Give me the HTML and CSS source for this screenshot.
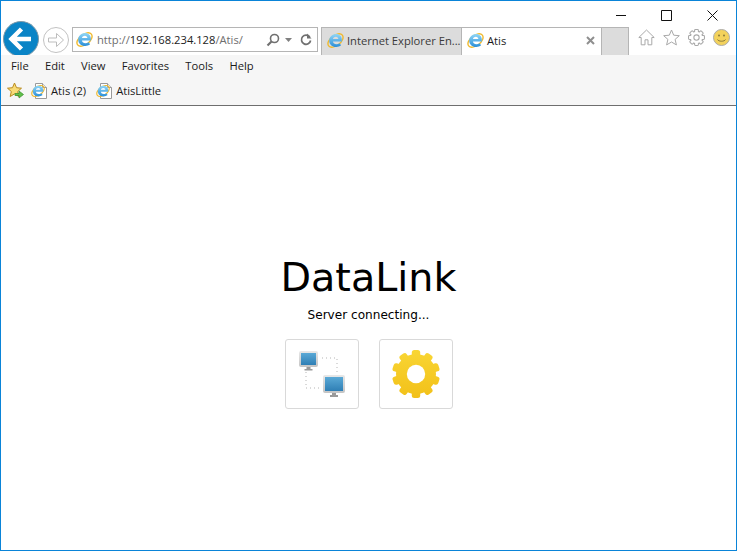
FILE: index.html
```html
<!DOCTYPE html>
<html lang="en">
<head>
<meta charset="utf-8">
<title>Atis</title>
<link rel="stylesheet" href="styles.css">
</head>
<body>
<svg class="defs" width="0" height="0" aria-hidden="true">
  <defs>
    <linearGradient id="ieBlue" x1="0" y1="0" x2="0" y2="1"><stop offset="0" stop-color="#8fd6f7"/><stop offset="1" stop-color="#2b8fd8"/></linearGradient>
    <linearGradient id="screen" x1="0" y1="0" x2="0" y2="1"><stop offset="0" stop-color="#5aa9d6"/><stop offset="1" stop-color="#2f7fb5"/></linearGradient>
    <linearGradient id="frame" x1="0" y1="0" x2="0" y2="1"><stop offset="0" stop-color="#e8e8e8"/><stop offset="1" stop-color="#c4c4c4"/></linearGradient>
    <linearGradient id="gold" gradientUnits="userSpaceOnUse" x1="0" y1="10" x2="0" y2="60"><stop offset="0" stop-color="#f9d634"/><stop offset="1" stop-color="#f2c018"/></linearGradient>
    <symbol id="ie" viewBox="0 0 16 16">
      <ellipse cx="8" cy="8" rx="8.200" ry="4.800" transform="rotate(-38 8 8)" fill="none" stroke="#efb92e" stroke-width="1.300"/>
      <path transform="translate(8 8) scale(1.080) translate(-8.300 -8.400)" fill="url(#ieBlue)" d="M13.800 9.200H6.100c.2 1.500 1.400 2.400 3 2.400 1 0 1.900-.3 2.700-.9l1.400 1.900c-1.200 1-2.700 1.500-4.300 1.500C5.400 14.100 2.800 11.800 2.800 8.600S5.400 2.800 8.800 2.800c3.100 0 5.100 2.200 5.100 5.300 0 .4 0 .8-.1 1.100zM6.100 7.200h4.700c-.1-1.200-.9-2-2.200-2s-2.300.8-2.500 2z"/>
    </symbol>
    <symbol id="favpage" viewBox="0 0 16 16">
      <path d="M4.500.5h7l4 4v11h-11z" fill="#fff" stroke="#9a9a9a"/>
      <path d="M11.500.5v4h4" fill="#eee" stroke="#9a9a9a"/>
      <use href="#ie" x="0" y="1" width="14" height="14"/>
    </symbol>
    <mask id="gearMask">
      <circle cx="37" cy="35" r="20" fill="#fff"/>
      <g fill="#fff">
        <rect x="32.800" y="11" width="8.400" height="48" rx="2.500"/>
        <rect x="32.800" y="11" width="8.400" height="48" rx="2.500" transform="rotate(36 37 35)"/>
        <rect x="32.800" y="11" width="8.400" height="48" rx="2.500" transform="rotate(72 37 35)"/>
        <rect x="32.800" y="11" width="8.400" height="48" rx="2.500" transform="rotate(108 37 35)"/>
        <rect x="32.800" y="11" width="8.400" height="48" rx="2.500" transform="rotate(144 37 35)"/>
      </g>
      <circle cx="37" cy="35" r="9.200" fill="#000"/>
    </mask>
  </defs>
</svg>
<div class="window">
  <header class="chrome">
    <div class="caption">
      <svg class="cap-icon" width="10" height="10" viewBox="0 0 10 10"><path d="M0 5.500h10" stroke="#111" fill="none"/></svg>
      <svg class="cap-icon" width="11" height="11" viewBox="0 0 11 11"><path d="M.5.5h10v10H.5z" stroke="#111" fill="none"/></svg>
      <svg class="cap-icon" width="11" height="11" viewBox="0 0 11 11"><path d="M.5.5l10 10M10.500.5l-10 10" stroke="#111" fill="none"/></svg>
    </div>
    <div class="navrow">
      <div class="back">
        <svg width="36" height="36" viewBox="0 0 36 36"><circle cx="18" cy="18" r="17.500" fill="#0a84c6" stroke="#7f99a8"/><path d="M28 18H10M18.500 8l-10 10 10 10" fill="none" stroke="#fff" stroke-width="4.500"/></svg>
      </div>
      <div class="forward">
        <svg width="26" height="26" viewBox="0 0 26 26"><circle cx="13" cy="13" r="12.500" fill="#fff" stroke="#c2c2c2"/><path d="M5.500 11h8V6.500l7 6.500-7 6.500V15h-8z" fill="#fff" stroke="#bdbdbd"/></svg>
      </div>
      <div class="address">
        <svg class="ie-icon" width="17" height="17"><use href="#ie"/></svg>
        <span class="url"><span class="dim">http://</span>192.168.234.128<span class="dim">/Atis/</span></span>
        <svg class="addr-tool" width="14" height="14" viewBox="0 0 14 14"><circle cx="8.500" cy="5.500" r="4" fill="none" stroke="#707070" stroke-width="1.600"/><path d="M5.500 8.500L1.500 12.500" stroke="#707070" stroke-width="2.200"/></svg>
        <svg class="addr-caret" width="7" height="4" viewBox="0 0 7 4"><path d="M0 0h7L3.500 4z" fill="#808080"/></svg>
        <svg class="addr-tool" width="12" height="13" viewBox="0 0 12 13"><path d="M9.800 4A4.600 4.600 0 1 0 10.600 7.500" fill="none" stroke="#707070" stroke-width="1.700"/><path d="M7 .5v5h4.500z" fill="#707070"/></svg>
      </div>
      <div class="tabs">
        <div class="tab">
          <svg class="ie-icon" width="17" height="17"><use href="#ie"/></svg>
          <span class="tab-title">Internet Explorer En...</span>
        </div>
        <div class="tab active">
          <svg class="ie-icon" width="17" height="17"><use href="#ie"/></svg>
          <span class="tab-title">Atis</span>
          <svg class="tab-close" width="9" height="9" viewBox="0 0 9 9"><path d="M1 1l7 7M8 1L1 8" stroke="#8f8f8f" stroke-width="2"/></svg>
        </div>
        <div class="tab newtab"></div>
      </div>
      <div class="tools">
        <svg width="17" height="17" viewBox="0 0 17 17"><path d="M8.500 1L.8 8.500h2.400v7.300h3.800v-5h3v5h3.800V8.500h2.400z" fill="#fff" stroke="#a9a9a9"/></svg>
        <svg width="17" height="17" viewBox="0 0 17 17"><path d="M8.500 1l2.200 5.200 5.600.5-4.200 3.700 1.300 5.500-4.900-2.900-4.900 2.900 1.300-5.500L.7 6.700l5.600-.5z" fill="#fff" stroke="#a9a9a9"/></svg>
        <svg width="17" height="17" viewBox="0 0 16 16" fill="#fff" stroke="#a9a9a9"><circle cx="8" cy="8" r="5.800"/><rect x="6.200" y=".5" width="3.600" height="15" rx=".8"/><rect x="6.200" y=".5" width="3.600" height="15" rx=".8" transform="rotate(45 8 8)"/><rect x="6.200" y=".5" width="3.600" height="15" rx=".8" transform="rotate(90 8 8)"/><rect x="6.200" y=".5" width="3.600" height="15" rx=".8" transform="rotate(135 8 8)"/><circle cx="8" cy="8" r="5.300" stroke="none"/><circle cx="8" cy="8" r="2.500"/></svg>
        <svg width="17" height="17" viewBox="0 0 17 17"><circle cx="8.500" cy="8.500" r="8" fill="#f3d25c" stroke="#ababab"/><circle cx="6" cy="6.500" r="1" fill="#8b7a3a"/><circle cx="11" cy="6.500" r="1" fill="#8b7a3a"/><path d="M4.500 10.500c1 2.300 7 2.300 8 0" fill="none" stroke="#8b7a3a"/></svg>
      </div>
    </div>
    <nav class="menubar">
      <span>File</span><span>Edit</span><span>View</span><span>Favorites</span><span>Tools</span><span>Help</span>
    </nav>
    <div class="favbar">
      <svg class="fav-star" width="17" height="17" viewBox="0 0 17 17"><path d="M7.500 1l2 4.700 5 .5-3.800 3.300 1.100 5-4.300-2.600-4.300 2.600 1.100-5L.5 6.200l5-.5z" fill="#f8dc78" stroke="#b98b1e"/><path d="M8 11.500h4V9l4.500 3.500L12 16v-2.500H8z" fill="#5fc04a" stroke="#3b8d2c" stroke-width=".7"/></svg>
      <a class="fav-link"><svg width="16" height="16"><use href="#favpage"/></svg>Atis (2)</a>
      <a class="fav-link"><svg width="16" height="16"><use href="#favpage"/></svg>AtisLittle</a>
    </div>
  </header>
  <main class="page">
    <h1 class="title">DataLink</h1>
    <p class="status">Server connecting...</p>
    <div class="actions">
      <button class="action" type="button" aria-label="Connection">
        <svg width="74" height="70" viewBox="0 0 74 70">
          <path d="M37 19H52V33M21 33V49H37" fill="none" stroke="#b5b5b5" stroke-dasharray="1 3"/>
          <rect x="14" y="12" width="19" height="16" rx="2" fill="url(#frame)"/>
          <rect x="16" y="14" width="15" height="12" fill="url(#screen)"/>
          <path d="M21.500 28h4v2h-4zM19.500 30h8v1.500h-8z" fill="#9a9a9a"/>
          <rect x="38" y="36" width="22" height="18" rx="2" fill="url(#frame)"/>
          <rect x="40" y="38" width="18" height="14" fill="url(#screen)"/>
          <path d="M47 54h4v2h-4zM45 56h8v2h-8z" fill="#9a9a9a"/>
        </svg>
      </button>
      <button class="action" type="button" aria-label="Settings">
        <svg width="74" height="70" viewBox="0 0 74 70"><rect x="10" y="8" width="54" height="54" fill="url(#gold)" mask="url(#gearMask)"/></svg>
      </button>
    </div>
  </main>
</div>
</body>
</html>
```

FILE: styles.css
```css
* { box-sizing: border-box; }
html, body { margin: 0; height: 100%; }
body { background: #fff; overflow: hidden; }
.defs { position: absolute; }
svg { display: block; flex: none; }

.window {
  height: 551px;
  border: 1px solid #0a84d8;
  display: flex;
  flex-direction: column;
  font-family: "Open Sans", "Liberation Sans", sans-serif;
  font-size: 11.2px;
  color: #1a1a1a;
}
.chrome { flex: none; }

.caption {
  height: 26px;
  display: flex;
  justify-content: flex-end;
  align-items: flex-start;
  gap: 35px;
  padding: 9px 18px 0 0;
}

.navrow {
  height: 28px;
  display: flex;
  align-items: flex-start;
}
.back { margin: -6px 0 0 2px; }
.forward { margin: 0 0 0 4px; }

.address {
  width: 246px;
  height: 25px;
  margin-left: 3px;
  border: 1px solid #b5b5b5;
  display: flex;
  align-items: center;
  padding: 0 5px 0 3px;
  background: #fff;
}
.url { margin-left: 4px; flex: 1; color: #222; white-space: nowrap; }
.dim { color: #6e6e6e; }
.addr-tool { margin-left: 3px; }
.addr-caret { margin: 0 5px 0 5px; }

.tabs {
  display: flex;
  margin-left: 3px;
  height: 28px;
}
.tab {
  width: 140px;
  border: 1px solid #b5b5b5;
  border-bottom: 0;
  border-right: 0;
  background: #dcdcdc;
  display: flex;
  align-items: center;
  padding: 0 0 2px 5px;
  color: #3a3a3a;
  white-space: nowrap;
}
.tab .ie-icon { margin-right: 3px; }
.tab-title { flex: 1; }
.tab.active { background: #fff; color: #1a1a1a; }
.tab-close { margin-right: 6px; }
.newtab { width: 28px; padding: 0; border-right: 1px solid #b5b5b5; }

.tools {
  display: flex;
  gap: 8px;
  margin: 2px 0 0 9px;
}

.menubar {
  position: relative;
  height: 24px;
  background: #f6f6f6;
  display: flex;
  align-items: center;
  gap: 16.250px;
  padding: 0 0 4px 10px;
  color: #1a1a1a;
}

.favbar {
  height: 27px;
  background: #f6f6f6;
  border-bottom: 1px solid #6e6e6e;
  display: flex;
  align-items: center;
  padding: 0 0 3px 6px;
}
.fav-star { margin-right: 7px; }
.fav-link { display: flex; align-items: center; gap: 4px; margin-right: 10px; }

.page {
  flex: 1;
  display: flex;
  flex-direction: column;
  align-items: center;
  justify-content: center;
  padding-top: 6px;
  font-family: "DejaVu Sans", sans-serif;
  color: #000;
}
.title { margin: 0; font-size: 39.700px; font-weight: 400; line-height: 48px; }
.status { margin: 6px 0 16px; font-size: 12.100px; line-height: 16px; }
.actions { display: flex; gap: 20px; }
.action {
  width: 74px;
  height: 70px;
  padding: 0;
  background: #fff;
  border: 1px solid #d9d9d9;
  border-radius: 3px;
  display: flex;
  align-items: center;
  justify-content: center;
}
```
